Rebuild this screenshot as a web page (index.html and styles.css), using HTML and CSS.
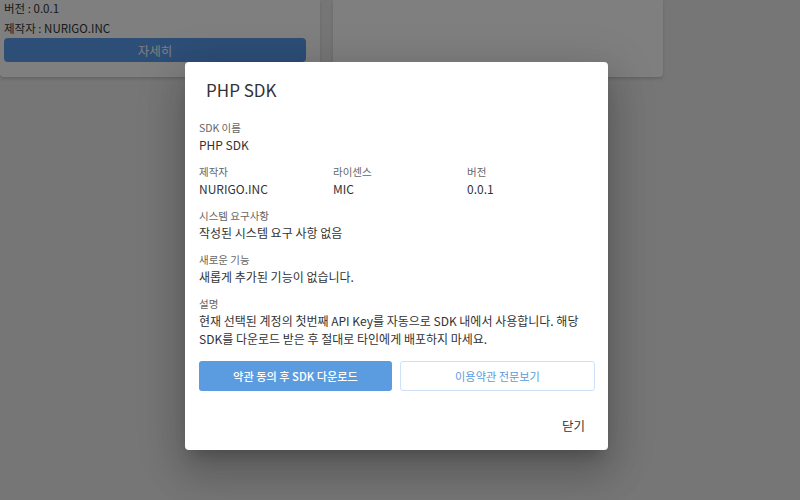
FILE: index.html
```html
<!DOCTYPE html>
<html>
	<head>
		<meta charset="UTF-8">
		<title>PHP SDK</title>
		<link rel="stylesheet" href="styles.css">
	</head>
	<body>
		<div class="page">
			<div class="card card-sdk">
				<p class="line">버전 : 0.0.1</p>
				<p class="line">제작자 : NURIGO.INC</p>
				<button class="btn-detail">자세히</button>
			</div>
			<div class="card card-empty"></div>
		</div>

		<div class="overlay"></div>

		<div class="dialog">
			<h2 class="dialog-title">PHP SDK</h2>
			<div class="dialog-body">
				<div class="field">
					<div class="label">SDK 이름</div>
					<div class="value">PHP SDK</div>
				</div>
				<div class="field-row">
					<div class="field">
						<div class="label">제작자</div>
						<div class="value">NURIGO.INC</div>
					</div>
					<div class="field">
						<div class="label">라이센스</div>
						<div class="value">MIC</div>
					</div>
					<div class="field">
						<div class="label">버전</div>
						<div class="value">0.0.1</div>
					</div>
				</div>
				<div class="field">
					<div class="label">시스템 요구사항</div>
					<div class="value">작성된 시스템 요구 사항 없음</div>
				</div>
				<div class="field">
					<div class="label">새로운 기능</div>
					<div class="value">새롭게 추가된 기능이 없습니다.</div>
				</div>
				<div class="field">
					<div class="label">설명</div>
					<div class="value">현재 선택된 계정의 첫번째 API Key를 자동으로 SDK 내에서 사용합니다. 해당 SDK를 다운로드 받은 후 절대로 타인에게 배포하지 마세요.</div>
				</div>
				<div class="actions">
					<button class="btn btn-primary">약관 동의 후 SDK 다운로드</button>
					<button class="btn btn-outline">이용약관 전문보기</button>
				</div>
			</div>
			<div class="dialog-footer">
				<button class="btn-text">닫기</button>
			</div>
		</div>
	</body>
</html>
```

FILE: styles.css
```css
* {
	margin: 0;
	padding: 0;
	box-sizing: border-box;
}

body {
	width: 800px;
	height: 500px;
	overflow: hidden;
	background: #ececec;
	font-family: "Noto Sans CJK KR", "Noto Sans", sans-serif;
	color: #333;
}

button {
	font-family: inherit;
	border: none;
	background: none;
	cursor: pointer;
}

/* 뒤쪽 페이지 */
.page {
	display: flex;
	align-items: flex-start;
	gap: 13px;
}

.card {
	background: #fff;
	border-radius: 0 0 4px 4px;
	box-shadow: 0 2px 3px rgba(0, 0, 0, 0.15);
}

.card-sdk {
	display: flex;
	flex-direction: column;
	gap: 4px;
	width: 320px;
	padding: 0 14px 15px 4px;
}

.card-sdk .line {
	font-size: 11.5px;
	line-height: 16px;
	color: #333;
}

.btn-detail {
	display: block;
	width: 100%;
	height: 24px;
	margin-top: -2px;
	border-radius: 4px;
	background: #5a9cee;
	color: #fff;
	font-size: 12.5px;
}

.card-empty {
	width: 330px;
	height: 77px;
}

.overlay {
	position: absolute;
	top: 0;
	left: 0;
	width: 800px;
	height: 500px;
	background: rgba(0, 0, 0, 0.5);
}

/* 다이얼로그 */
.dialog {
	position: absolute;
	top: 62px;
	left: 185px;
	width: 423px;
	height: 388px;
	background: #fff;
	border-radius: 4px;
	box-shadow: 0 11px 15px -7px rgba(0, 0, 0, 0.2), 0 24px 38px 3px rgba(0, 0, 0, 0.14), 0 9px 46px 8px rgba(0, 0, 0, 0.12);
}

.dialog-title {
	padding: 16px 21px 0;
	font-size: 17px;
	line-height: 24px;
	font-weight: 400;
	color: #333;
}

.dialog-body {
	padding: 18px 13px 0 14px;
}

.field {
	margin-bottom: 10px;
}

.field-row {
	display: grid;
	grid-template-columns: 134px 134px 1fr;
}

.label {
	font-size: 10.5px;
	line-height: 16px;
	color: #666;
}

.value {
	font-size: 12px;
	line-height: 18px;
	color: #333;
}

.actions {
	display: flex;
	gap: 8px;
	margin-top: 13px;
}

.btn {
	flex: 1;
	height: 30px;
	border-radius: 3px;
	font-size: 11.2px;
}

.btn-primary {
	background: #5b9be0;
	color: #fff;
	font-weight: 500;
}

.btn-outline {
	border: 1px solid #cfe1f6;
	color: #5b9be0;
}

.dialog-footer {
	display: flex;
	justify-content: flex-end;
	padding: 26px 23px 0;
}

.btn-text {
	font-size: 12.5px;
	line-height: 18px;
	color: #333;
}
```
